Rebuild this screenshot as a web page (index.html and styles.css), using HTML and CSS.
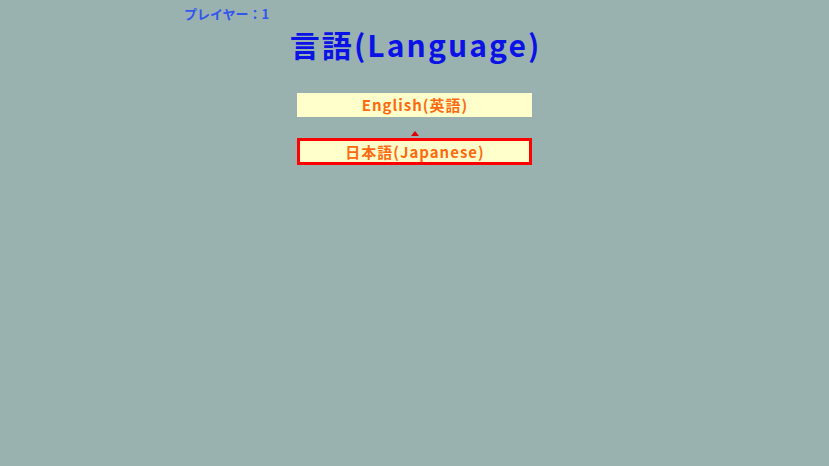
FILE: index.html
```html
<!DOCTYPE html>
<html lang="ja">
<head>
    <meta charset="UTF-8">
    <title>言語</title>
    <link rel="stylesheet" href="styles.css">
</head>
<body>
    <div class="screen">
        <div class="player">プレイヤー：1</div>
        <h1 class="title">言語(Language)</h1>
        <ul class="menu">
            <li class="item">English(英語)</li>
            <li class="item selected">日本語(Japanese)</li>
        </ul>
    </div>
</body>
</html>
```

FILE: styles.css
```css
* {
    margin: 0;
    padding: 0;
    box-sizing: border-box;
}

body {
    background-color: #99b2b0;
    font-family: "Noto Sans CJK JP", "Noto Sans", sans-serif;
    font-weight: bold;
}

.screen {
    width: 829px;
    height: 466px;
    display: flex;
    flex-direction: column;
    align-items: center;
}

.player {
    align-self: flex-start;
    margin-left: 184px;
    margin-top: 4px;
    font-size: 13px;
    line-height: 20px;
    color: #3355ee;
}

.title {
    font-size: 30px;
    line-height: 40px;
    letter-spacing: 2.1px;
    padding-left: 2.1px;
    color: #0a12e6;
}

.menu {
    list-style: none;
    margin-top: 29px;
    display: flex;
    flex-direction: column;
    gap: 21px;
}

.item {
    width: 235px;
    height: 24px;
    background-color: #ffffcc;
    color: #ff6a10;
    font-size: 15px;
    line-height: 24px;
    letter-spacing: 1px;
    padding-left: 1px;
    text-align: center;
    position: relative;
}

.item.selected {
    height: 27px;
    line-height: 21px;
    border: 3px solid #ff0000;
}

/* cursor arrow above the chosen entry */
.item.selected::before {
    content: "";
    position: absolute;
    left: 50%;
    top: -10px;
    margin-left: -4px;
    border-left: 4px solid transparent;
    border-right: 4px solid transparent;
    border-bottom: 5px solid #dd0000;
}
```
